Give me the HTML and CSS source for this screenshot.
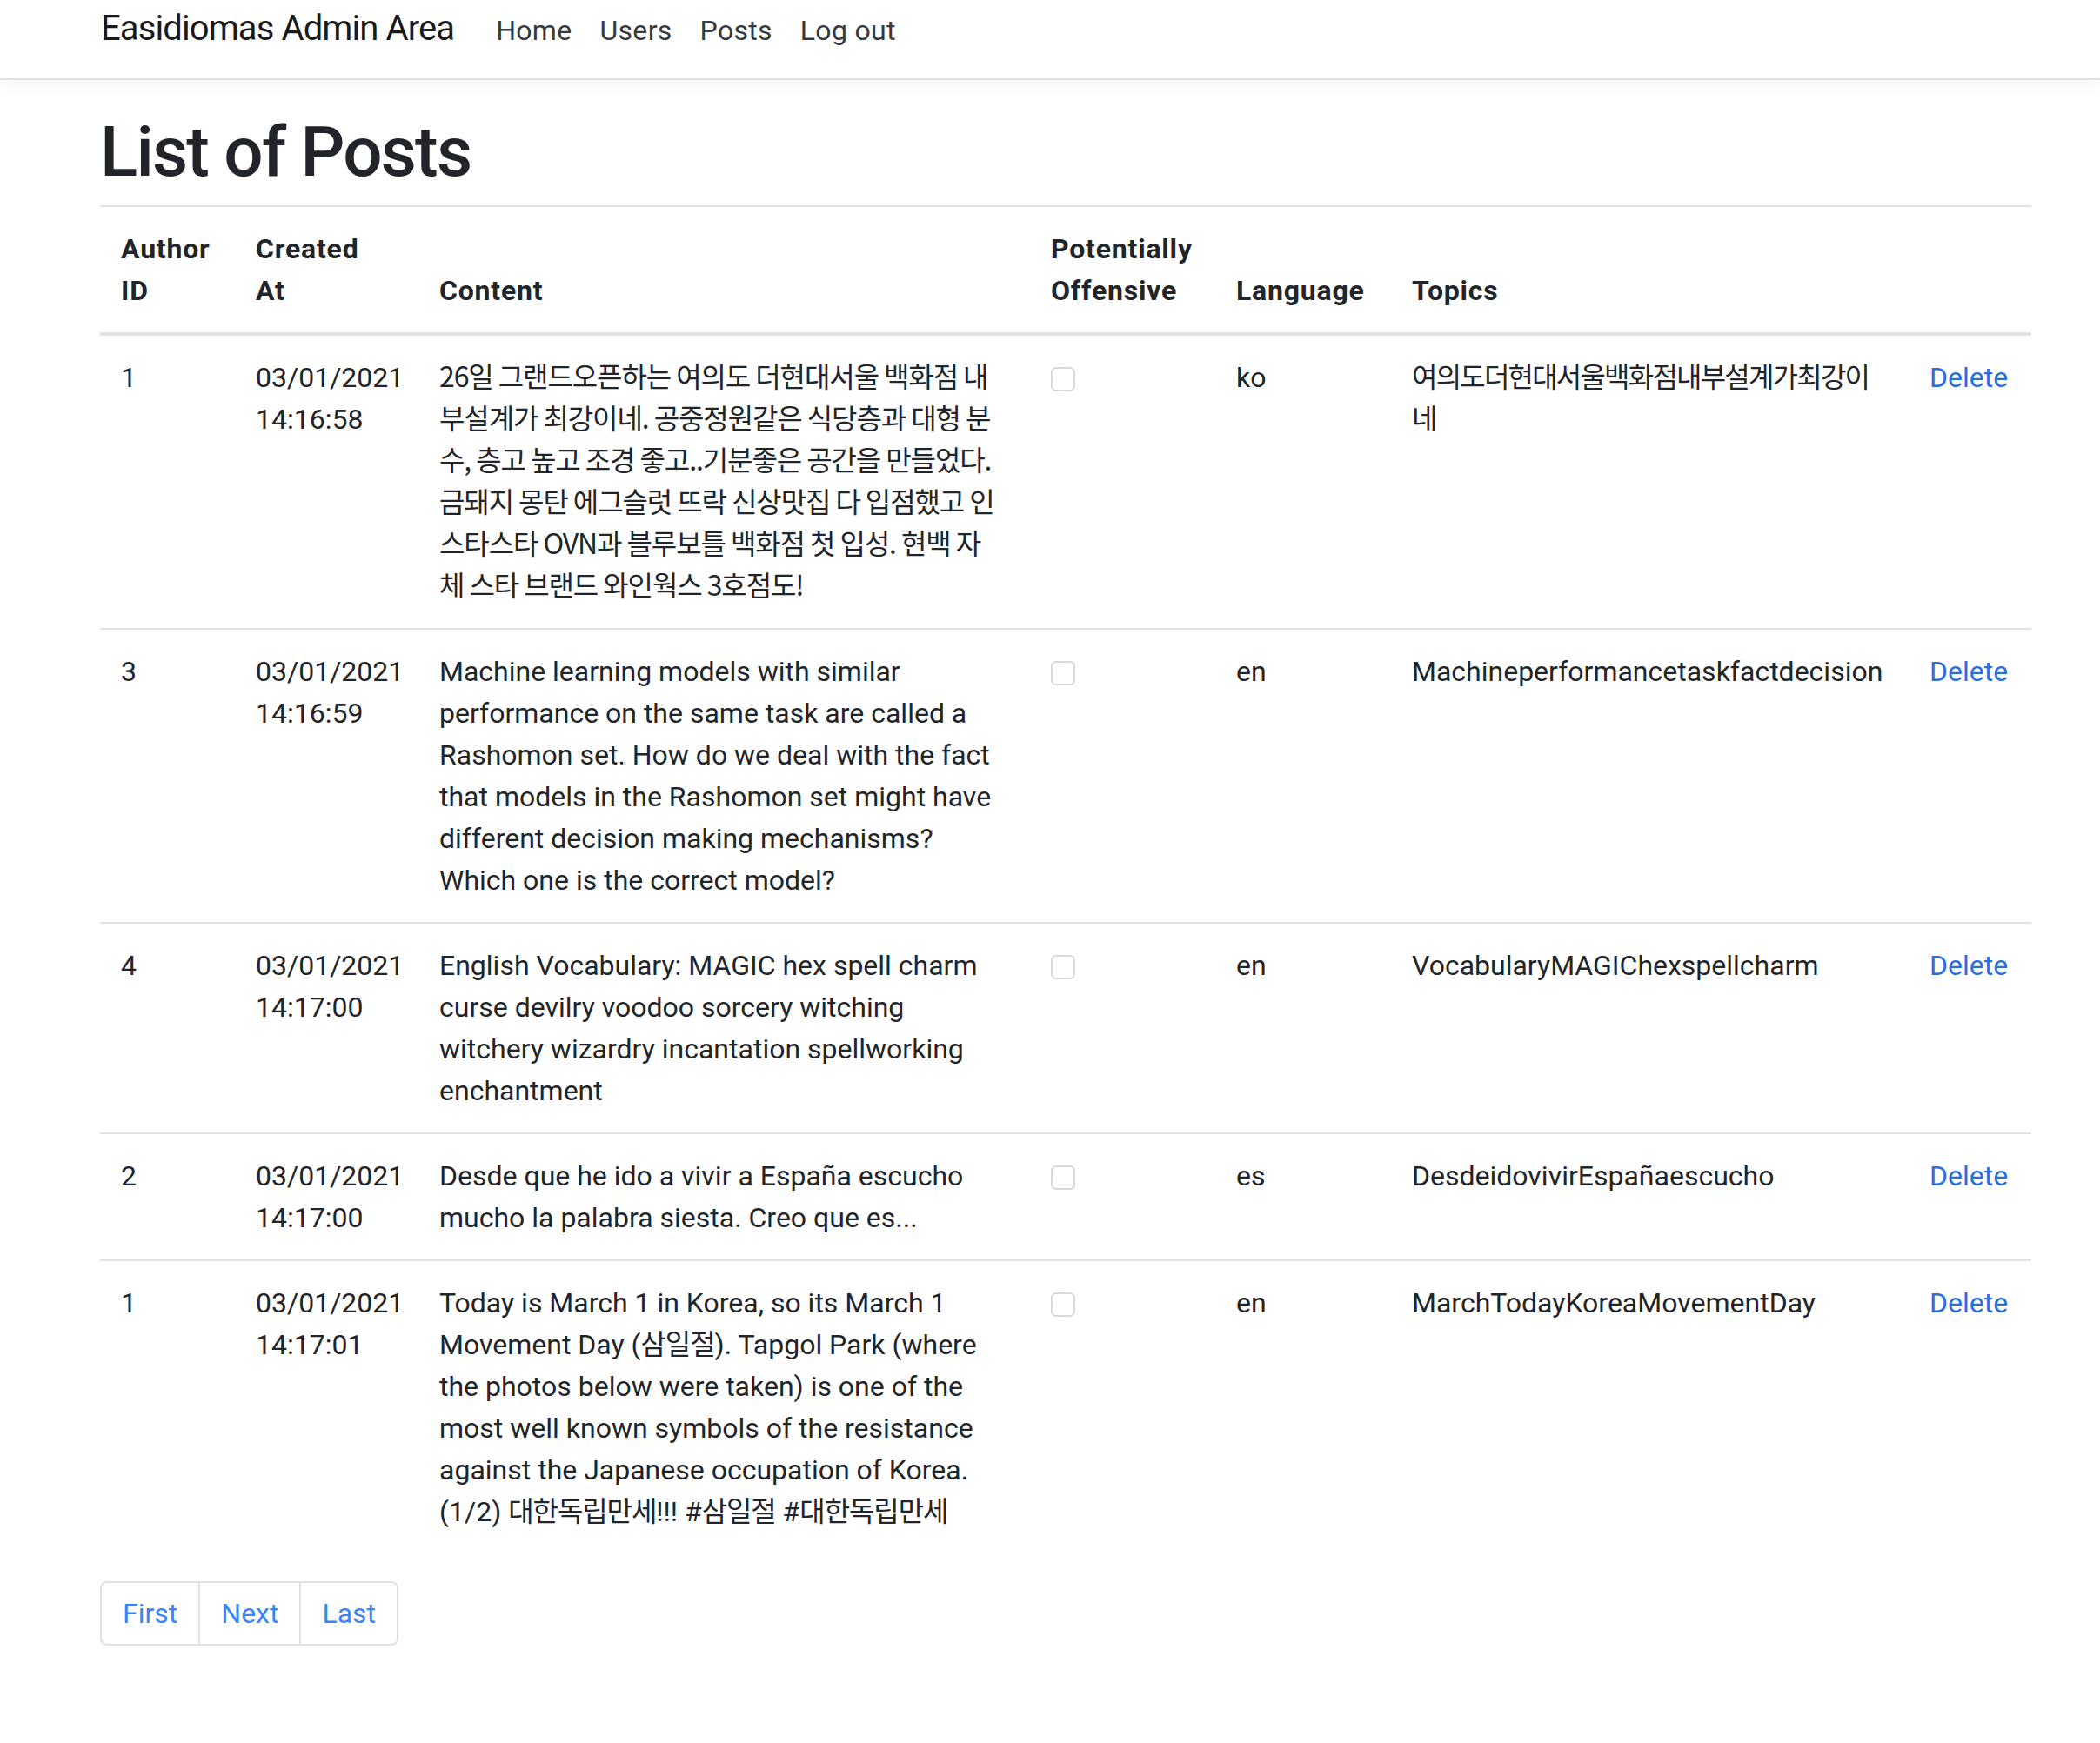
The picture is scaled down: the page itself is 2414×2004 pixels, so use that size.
FILE: index.html
```html
<!DOCTYPE html>
<html lang="en">
<head>
<meta charset="utf-8">
<title>Easidiomas Admin Area</title>
<link rel="stylesheet" href="styles.css">
</head>
<body>
<nav class="navbar">
  <div class="nav-inner">
    <a class="brand" href="#">Easidiomas Admin Area</a>
    <a class="nav-link" href="#">Home</a>
    <a class="nav-link" href="#">Users</a>
    <a class="nav-link" href="#">Posts</a>
    <a class="nav-link" href="#">Log out</a>
  </div>
</nav>
<main class="container">
  <h1 class="title">List of Posts</h1>
  <table class="table">
    <colgroup>
      <col class="c-author"><col class="c-created"><col class="c-content"><col class="c-off"><col class="c-lang"><col class="c-topics"><col class="c-action">
    </colgroup>
    <thead>
      <tr>
        <th>Author<br>ID</th>
        <th>Created<br>At</th>
        <th>Content</th>
        <th>Potentially<br>Offensive</th>
        <th>Language</th>
        <th>Topics</th>
        <th></th>
      </tr>
    </thead>
    <tbody>
      <tr>
        <td>1</td>
        <td>03/01/2021 14:16:58</td>
        <td class="content"><span class="ko">26일 그랜드오픈하는 여의도 더현대서울 백화점 내</span><br><span class="ko">부설계가 최강이네. 공중정원같은 식당층과 대형 분</span><br><span class="ko">수, 층고 높고 조경 좋고..기분좋은 공간을 만들었다.</span><br><span class="ko">금돼지 몽탄 에그슬럿 뜨락 신상맛집 다 입점했고 인</span><br><span class="ko">스타스타 OVN과 블루보틀 백화점 첫 입성. 현백 자</span><br><span class="ko">체 스타 브랜드 와인웍스 3호점도!</span></td>
        <td><span class="check"></span></td>
        <td>ko</td>
        <td class="content"><span class="ko ko-tight">여의도더현대서울백화점내부설계가최강이</span><br><span class="ko ko-tight">네</span></td>
        <td><a class="link" href="#">Delete</a></td>
      </tr>
      <tr>
        <td>3</td>
        <td>03/01/2021 14:16:59</td>
        <td class="content">Machine learning models with similar<br>performance on the same task are called a<br>Rashomon set. How do we deal with the fact<br>that models in the Rashomon set might have<br>different decision making mechanisms?<br>Which one is the correct model?</td>
        <td><span class="check"></span></td>
        <td>en</td>
        <td>Machineperformancetaskfactdecision</td>
        <td><a class="link" href="#">Delete</a></td>
      </tr>
      <tr>
        <td>4</td>
        <td>03/01/2021 14:17:00</td>
        <td class="content">English Vocabulary: MAGIC hex spell charm<br>curse devilry voodoo sorcery witching<br>witchery wizardry incantation spellworking<br>enchantment</td>
        <td><span class="check"></span></td>
        <td>en</td>
        <td>VocabularyMAGIChexspellcharm</td>
        <td><a class="link" href="#">Delete</a></td>
      </tr>
      <tr>
        <td>2</td>
        <td>03/01/2021 14:17:00</td>
        <td class="content">Desde que he ido a vivir a España escucho<br>mucho la palabra siesta. Creo que es...</td>
        <td><span class="check"></span></td>
        <td>es</td>
        <td>DesdeidovivirEspañaescucho</td>
        <td><a class="link" href="#">Delete</a></td>
      </tr>
      <tr>
        <td>1</td>
        <td>03/01/2021 14:17:01</td>
        <td class="content">Today is March 1 in Korea, so its March 1<br>Movement Day (<span class="ko">삼일절</span>). Tapgol Park (where<br>the photos below were taken) is one of the<br>most well known symbols of the resistance<br>against the Japanese occupation of Korea.<br>(1/2) <span class="ko">대한독립만세</span>!!! #<span class="ko">삼일절</span> #<span class="ko">대한독립만세</span></td>
        <td><span class="check"></span></td>
        <td>en</td>
        <td>MarchTodayKoreaMovementDay</td>
        <td><a class="link" href="#">Delete</a></td>
      </tr>
    </tbody>
  </table>
  <ul class="pagination">
    <li><a class="page-link" href="#">First</a></li>
    <li><a class="page-link" href="#">Next</a></li>
    <li><a class="page-link" href="#">Last</a></li>
  </ul>
</main>
</body>
</html>
```
FILE: styles.css
```css
html, body {
  margin: 0;
  padding: 0;
  background: #fff;
}
body {
  font-family: Roboto, "Noto Sans CJK KR", sans-serif;
  font-size: 32px;
  line-height: 48px;
  color: #212529;
}
a {
  text-decoration: none;
}
.navbar {
  height: 90px;
  border-bottom: 2px solid #dee2e6;
  box-shadow: 0 6px 20px rgba(0, 0, 0, 0.035);
  background: #fff;
}
.nav-inner {
  display: flex;
  align-items: baseline;
  padding: 3px 0 0 116px;
}
.brand {
  font-size: 40px;
  line-height: 60px;
  letter-spacing: -0.9px;
  color: #1a1a1a;
  margin-right: 32px;
}
.nav-link {
  color: #343a40;
  padding: 0 16px;
  font-size: 32px;
  line-height: 48px;
  letter-spacing: 0.3px;
}
.container {
  width: 2220px;
  margin-left: 115px;
}
.title {
  font-size: 80px;
  line-height: 96px;
  font-weight: 500;
  letter-spacing: -1.8px;
  margin: 32px 0 13px;
  padding-top: 3px;
  color: #212529;
}
.table {
  width: 2220px;
  table-layout: fixed;
  border-collapse: collapse;
  margin-bottom: 32px;
}
.c-author { width: 155px; }
.c-created { width: 211px; }
.c-content { width: 703px; }
.c-off { width: 213px; }
.c-lang { width: 202px; }
.c-topics { width: 595px; }
.c-action { width: 141px; }
.table th,
.table td {
  padding: 24px;
  border-top: 2px solid #dee2e6;
  vertical-align: top;
  text-align: left;
}
.table thead th {
  vertical-align: bottom;
  border-bottom: 4px solid #dee2e6;
  font-weight: 700;
  letter-spacing: 0.8px;
  white-space: nowrap;
}
.table tbody tr:first-child td {
  border-top: 0;
}
.content {
  white-space: nowrap;
}
.ko {
  font-family: "Noto Sans CJK KR", sans-serif;
  line-height: 32px;
  letter-spacing: -1.1px;
}
.ko-tight {
  letter-spacing: -1.8px;
}
.check {
  display: block;
  width: 28px;
  height: 28px;
  box-sizing: border-box;
  margin-top: 12px;
  border: 2px solid #d9d9d9;
  border-radius: 6px;
  background: #fff;
}
.link {
  color: #2a6fdb;
}
.pagination {
  display: flex;
  list-style: none;
  margin: 0;
  padding: 0;
}
.pagination li + li {
  margin-left: -2px;
}
.page-link {
  display: block;
  padding: 15px 24px;
  line-height: 40px;
  color: #3d84f5;
  border: 2px solid #dee2e6;
}
.pagination li:first-child .page-link {
  border-radius: 8px 0 0 8px;
}
.pagination li:last-child .page-link {
  border-radius: 0 8px 8px 0;
}
```
